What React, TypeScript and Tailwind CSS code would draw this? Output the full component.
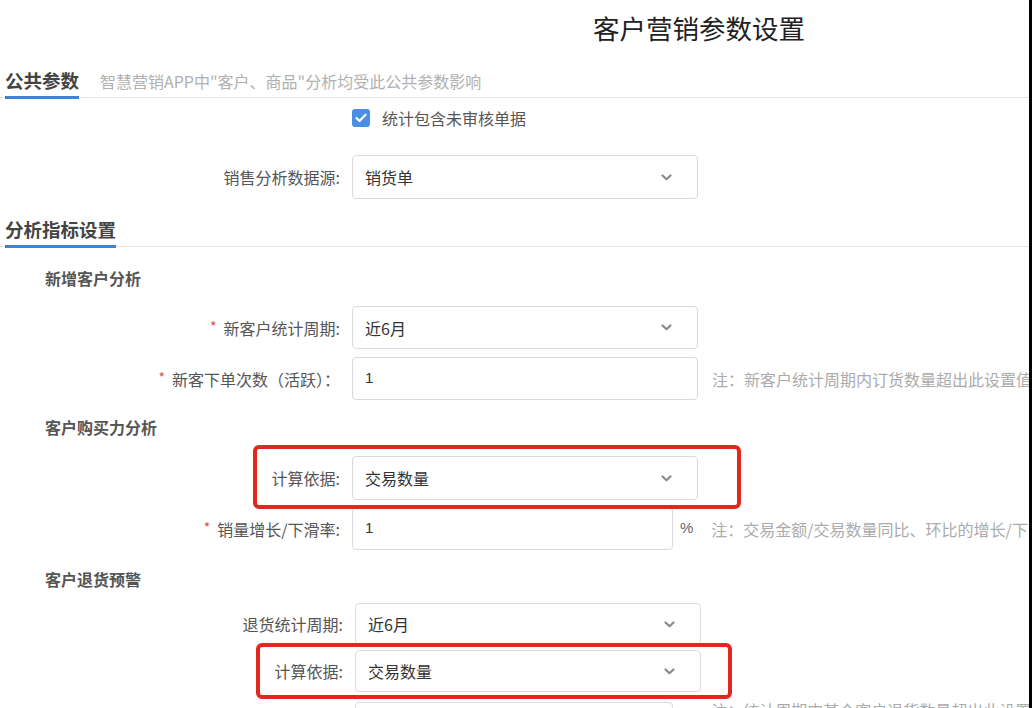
import React from "react";

const Chevron = () => (
  <svg width="11" height="7" viewBox="0 0 11 7" fill="none">
    <path d="M1.5 1.5 L5.5 5.2 L9.5 1.5" stroke="#8a8a8a" strokeWidth="2.2" strokeLinecap="round" strokeLinejoin="round" />
  </svg>
);

const Label = ({ text, req }: { text: string; req?: boolean }) => (
  <div className="w-[340px] shrink-0 flex justify-end items-center text-[16px] text-[#555]">
    {req && <span className="text-[#e5484d] text-[14px] mr-[7px] -mt-[3px]">*</span>}
    <span>{text}</span>
  </div>
);

const Select = ({ value, h = "h-[43px]", w = "w-[346px]" }: { value: string; h?: string; w?: string }) => (
  <div className={`${w} ${h} ml-[12px] shrink-0 border border-[#dadada] rounded-[4px] bg-white flex items-center justify-between pl-[12px] pr-[25px]`}>
    <span className="text-[16px] text-[#333]">{value}</span>
    <Chevron />
  </div>
);

const Input = ({ value, w = "w-[346px]", h = "h-[43px]" }: { value: string; w?: string; h?: string }) => (
  <div className={`${w} ${h} ml-[12px] shrink-0 border border-[#dadada] rounded-[4px] bg-white flex items-start pl-[12px] pt-[9px]`}>
    <span className="text-[15px] text-[#333] font-['Liberation_Sans']">{value}</span>
  </div>
);

const Note = ({ text }: { text: string }) => (
  <span className="ml-[14px] whitespace-nowrap text-[16px] text-[#ababab]">{text}</span>
);

const SectionHeader = ({ title, sub, h }: { title: string; sub?: string; h: string }) => (
  <div className={`${h} shrink-0 flex items-end border-b border-[#e6e6e6]`}>
    <span className="ml-[5px] -mb-[2px] pb-[4px] border-b-[3px] border-[#3f82da] text-[18.5px] leading-[24px] font-bold text-[#444] whitespace-nowrap">
      {title}
    </span>
    {sub && (
      <span className="ml-[21px] mb-[4px] text-[16px] leading-[24px] text-[#b0b0b0] whitespace-nowrap">{sub}</span>
    )}
  </div>
);

const SubHeader = ({ title, h, pt }: { title: string; h: string; pt: string }) => (
  <div className={`${h} ${pt} shrink-0`}>
    <div className="ml-[45px] text-[16px] leading-[22px] font-bold text-[#555]">{title}</div>
  </div>
);

export default function App() {
  return (
    <div className="w-[1032px] h-[708px] bg-white flex overflow-hidden font-['Noto_Sans_CJK_SC','Noto_Sans',sans-serif]">
      <div className="w-[1029px] h-[708px] overflow-hidden flex flex-col">
        {/* Title */}
        <div className="h-[60px] pt-[10px] shrink-0">
          <div className="ml-[593px] text-[26.5px] leading-[36px] text-[#222] whitespace-nowrap">客户营销参数设置</div>
        </div>

        <SectionHeader title="公共参数" sub={'智慧营销APP中"客户、商品"分析均受此公共参数影响'} h="h-[38px]" />

        {/* checkbox */}
        <div className="h-[40px] shrink-0 flex items-center">
          <div className="ml-[352px] w-[18px] h-[18px] rounded-[3px] bg-[#4a8fe6] flex items-center justify-center">
            <svg width="12" height="10" viewBox="0 0 12 10" fill="none">
              <path d="M1.5 5 L4.5 8 L10.5 1.8" stroke="white" strokeWidth="2.2" strokeLinecap="round" strokeLinejoin="round" />
            </svg>
          </div>
          <span className="ml-[12px] text-[16px] text-[#555]">统计包含未审核单据</span>
        </div>

        <div className="mt-[17px] flex shrink-0">
          <Label text="销售分析数据源:" />
          <Select value="销货单" h="h-[44px]" />
        </div>

        <SectionHeader title="分析指标设置" h="h-[48px]" />

        <SubHeader title="新增客户分析" h="h-[59px]" pt="pt-[20px]" />

        <div className="flex shrink-0">
          <Label text="新客户统计周期:" req />
          <Select value="近6月" />
        </div>
        <div className="mt-[8px] flex items-center shrink-0">
          <Label text="新客下单次数（活跃）：" req />
          <Input value="1" />
          <Note text="注：新客户统计周期内订货数量超出此设置值，则为活跃客户" />
        </div>

        <SubHeader title="客户购买力分析" h="h-[56px]" pt="pt-[16px]" />

        <div className="relative flex shrink-0">
          <Label text="计算依据:" />
          <Select value="交易数量" h="h-[44px]" />
          <div className="absolute left-[253px] top-[-11px] w-[488px] h-[64px] border-[4px] border-[#e3271e] rounded-[6px] pointer-events-none" />
        </div>
        <div className="mt-[7px] flex items-center shrink-0">
          <Label text="销量增长/下滑率:" req />
          <Input value="1" w="w-[321px]" />
          <span className="ml-[7px] text-[15px] text-[#666] font-['Liberation_Sans']">%</span>
          <span className="ml-[18px] whitespace-nowrap text-[16px] text-[#ababab]">注：交易金额/交易数量同比、环比的增长/下滑超出此设置值</span>
        </div>

        <SubHeader title="客户退货预警" h="h-[53px]" pt="pt-[18px]" />

        <div className="flex shrink-0 ml-[3px]">
          <Label text="退货统计周期:" />
          <Select value="近6月" h="h-[42px]" />
        </div>
        <div className="relative mt-[5px] flex shrink-0 ml-[3px]">
          <Label text="计算依据:" />
          <Select value="交易数量" h="h-[42px]" />
          <div className="absolute left-[253px] top-[-7px] w-[476px] h-[56px] border-[4px] border-[#e3271e] rounded-[6px] pointer-events-none" />
        </div>
        <div className="mt-[10px] flex items-start shrink-0 ml-[3px]">
          <Label text="" />
          <Input value="1" w="w-[318px]" />
          <span className="ml-[7px] text-[15px] text-[#666] font-['Liberation_Sans']">%</span>
          <span className="ml-[18px] whitespace-nowrap text-[16px] text-[#ababab] -mt-[4px]">注：统计周期内某个客户退货数量超出此设置值，进行预警</span>
        </div>
      </div>
      <div className="w-[3px] h-[708px] bg-black shrink-0" />
    </div>
  );
}
